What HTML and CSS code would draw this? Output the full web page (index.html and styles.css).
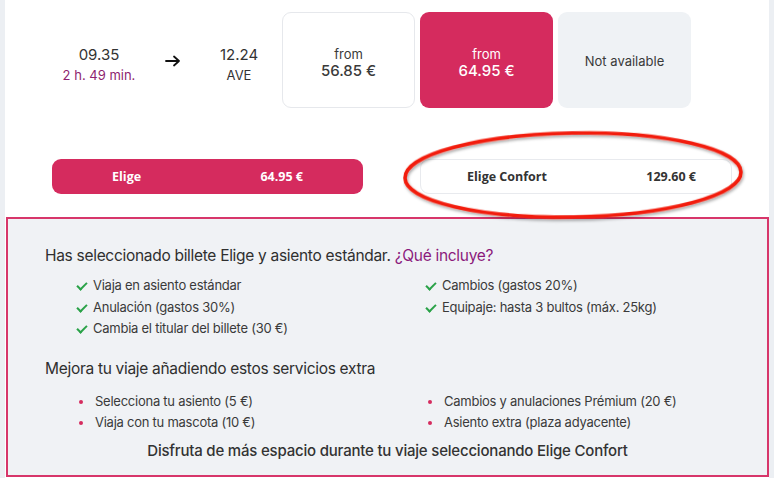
FILE: index.html
```html
<!DOCTYPE html>
<html lang="es">
<head>
<meta charset="utf-8">
<link rel="stylesheet" href="styles.css">
</head>
<body>
<div class="page">
  <div class="trip">
    <div class="times">
      <div class="stop dep">
        <div class="hour">09.35</div>
        <div class="duration">2 h. 49 min.</div>
      </div>
      <div class="arrow">
        <svg width="16" height="12" viewBox="0 0 16 12"><path d="M1 6H14M9 1.5L14 6L9 10.5" fill="none" stroke="#111" stroke-width="1.8" stroke-linecap="round" stroke-linejoin="round"/></svg>
      </div>
      <div class="stop arr">
        <div class="hour">12.24</div>
        <div class="train">AVE</div>
      </div>
    </div>
    <div class="fares">
      <div class="fare fare-basic">
        <div class="from">from</div>
        <div class="price">56.85 €</div>
      </div>
      <div class="fare fare-selected">
        <div class="from">from</div>
        <div class="price">64.95 €</div>
      </div>
      <div class="fare fare-na">Not available</div>
    </div>
  </div>

  <div class="choices">
    <div class="choice choice-active"><span class="label">Elige</span><span class="amount">64.95 €</span></div>
    <div class="choice choice-confort"><span class="label">Elige Confort</span><span class="amount">129.60 €</span></div>
    <svg class="annotation" width="350" height="100" viewBox="0 0 350 100">
      <defs>
        <filter id="sh" x="-10%" y="-20%" width="120%" height="140%">
          <feDropShadow dx="1" dy="2" stdDeviation="1.5" flood-color="#000" flood-opacity="0.35"/>
        </filter>
      </defs>
      <ellipse cx="170" cy="45" rx="168" ry="42" fill="none" stroke="#f21d0c" stroke-width="3.6" filter="url(#sh)" transform="rotate(-1 170 45)"/>
    </svg>
  </div>

  <div class="panel">
    <h2 class="panel-title">Has seleccionado billete Elige y asiento estándar. <span class="accent">¿Qué incluye?</span></h2>
    <ul class="list checks">
      <li>Viaja en asiento estándar</li>
      <li>Cambios (gastos 20%)</li>
      <li>Anulación (gastos 30%)</li>
      <li>Equipaje: hasta 3 bultos (máx. 25kg)</li>
      <li>Cambia el titular del billete (30 €)</li>
    </ul>
    <h2 class="panel-title extra-title">Mejora tu viaje añadiendo estos servicios extra</h2>
    <ul class="list bullets">
      <li>Selecciona tu asiento (5 €)</li>
      <li>Cambios y anulaciones Prémium (20 €)</li>
      <li>Viaja con tu mascota (10 €)</li>
      <li>Asiento extra (plaza adyacente)</li>
    </ul>
    <p class="promo">Disfruta de más espacio durante tu viaje seleccionando Elige Confort</p>
  </div>
</div>
</body>
</html>
```

FILE: styles.css
```css
* { box-sizing: border-box; }
html, body { margin: 0; padding: 0; }
body {
  background: #eceff3;
  font-family: Inter, "Noto Sans", sans-serif;
  color: #353535;
  width: 774px;
  height: 478px;
  overflow: hidden;
}
.page {
  margin-left: 5px;
  width: 764px;
  height: 478px;
  background: #fff;
}
.trip {
  display: flex;
  padding-top: 12px;
  padding-left: 44px;
}
.times {
  display: flex;
  align-items: center;
  padding-top: 11px;
}
.stop {
  text-align: center;
}
.dep { width: 100px; }
.arrow { width: 48px; display: flex; justify-content: center; padding-bottom: 10px; }
.arr { width: 84px; }
.hour {
  font-size: 15px;
  line-height: 20px;
  color: #333;
}
.duration {
  font-size: 13px;
  line-height: 21px;
  color: #8e1f6f;
}
.train {
  font-size: 13px;
  line-height: 21px;
  color: #333;
}
.fares {
  display: flex;
  gap: 5px;
  margin-left: 1px;
}
.fare {
  width: 133px;
  height: 96px;
  border-radius: 9px;
  display: flex;
  flex-direction: column;
  align-items: center;
  justify-content: center;
  text-align: center;
  padding-top: 5px;
}
.fare-basic {
  border: 1px solid #e6e8ec;
  color: #3a3a3a;
}
.fare-selected {
  background: #d52b5e;
  color: #fff;
}
.fare-na {
  background: #eff2f5;
  color: #3a3a3a;
  font-size: 13px;
  padding-top: 2px;
}
.from { font-size: 13px; line-height: 16px; }
.price { font-size: 15px; line-height: 18px; font-weight: 500; }

.choices {
  position: relative;
  display: flex;
  gap: 57px;
  margin-top: 51px;
  padding-left: 47px;
}
.choice {
  width: 311px;
  height: 35px;
  border-radius: 9px;
  display: flex;
  align-items: center;
  justify-content: space-between;
  font-family: "Open Sans", sans-serif;
  font-weight: 700;
  font-size: 12.5px;
}
.choice-active {
  background: #d52b5e;
  color: #fff;
  padding: 0 60px;
}
.choice-confort {
  width: 312px;
  background: #fff;
  border: 1px solid #e8eaee;
  color: #333;
  padding: 0 35px 0 46px;
}
.annotation {
  position: absolute;
  left: 398px;
  top: -29px;
  pointer-events: none;
}

.panel {
  margin-top: 23px;
  margin-left: 1px;
  width: 763px;
  height: 260px;
  background: #f0f2f5;
  border: 2px solid #d7366a;
  padding: 26px 0 0 37px;
}
.panel-title {
  margin: 0;
  font-size: 15.5px;
  line-height: 22px;
  font-weight: 400;
  letter-spacing: -0.3px;
  color: #2f2f2f;
}
.accent { color: #8b1a7c; }
.list {
  list-style: none;
  margin: 8px 0 0;
  padding: 0 0 0 33px;
  display: grid;
  grid-template-columns: 349px 1fr;
  row-gap: 0;
}
.list li {
  font-size: 13px;
  line-height: 21.5px;
  letter-spacing: -0.25px;
  color: #3a3a3a;
  position: relative;
}
.checks li { padding-left: 15px; }
.checks li::before {
  content: "";
  position: absolute;
  left: -1px;
  top: 7px;
  width: 8px;
  height: 4px;
  border-left: 2px solid #2aa248;
  border-bottom: 2px solid #2aa248;
  transform: rotate(-45deg);
}
.extra-title { margin-top: 18px; }
.bullets { margin-top: 11px; }
.bullets li { padding-left: 17px; }
.bullets li::before {
  content: "";
  position: absolute;
  left: 1px;
  top: 9px;
  width: 4px;
  height: 4px;
  border-radius: 50%;
  background: #d52b5e;
}
.promo {
  margin: 6px 0 0 -37px;
  text-align: center;
  font-size: 15px;
  line-height: 22px;
  font-weight: 500;
  letter-spacing: -0.2px;
  color: #333;
}
```
